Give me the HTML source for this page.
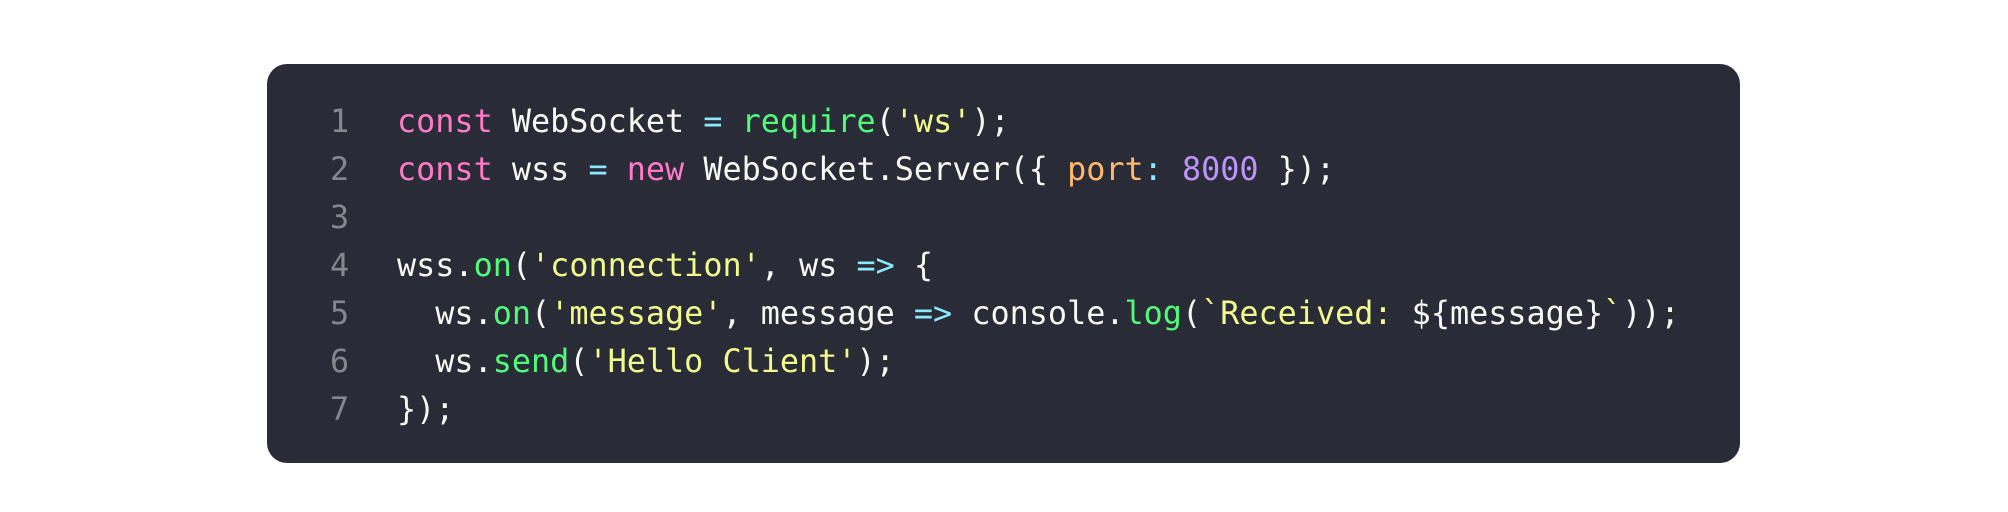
<!DOCTYPE html>
<html><head><meta charset="utf-8"><style>
html,body{margin:0;padding:0;background:#fff;width:2008px;height:512px;overflow:hidden}
.card{position:absolute;left:267px;top:64px;width:1473px;height:399px;background:#292b36;border-radius:20px}
.ln{position:absolute;left:330px;font-family:"DejaVu Sans Mono","Liberation Mono",monospace;font-size:31.8px;color:#85878e;line-height:48px}
.code{position:absolute;left:397px;font-family:"DejaVu Sans Mono","Liberation Mono",monospace;font-size:31.8px;color:#f8f8f2;line-height:48px;white-space:pre}
.k{color:#ff79c6}.f{color:#50fa7b}.o{color:#8be9fd}.s{color:#f1fa8c}.p{color:#ffb86c}.n{color:#bd93f9}
</style></head><body>
<div class="card"></div>
<div class="ln" style="top:98px">1<br>2<br>3<br>4<br>5<br>6<br>7</div>
<div class="code" style="top:98px"><span class="k">const</span> WebSocket <span class="o">=</span> <span class="f">require</span>(<span class="s">'ws'</span>);
<span class="k">const</span> wss <span class="o">=</span> <span class="k">new</span> WebSocket.Server({ <span class="p">port</span><span class="o">:</span> <span class="n">8000</span> });

wss.<span class="f">on</span>(<span class="s">'connection'</span>, ws <span class="o">=&gt;</span> {
  ws.<span class="f">on</span>(<span class="s">'message'</span>, message <span class="o">=&gt;</span> console.<span class="f">log</span>(<span class="s">`Received: </span>${message}<span class="s">`</span>));
  ws.<span class="f">send</span>(<span class="s">'Hello Client'</span>);
});</div>
</body></html>
